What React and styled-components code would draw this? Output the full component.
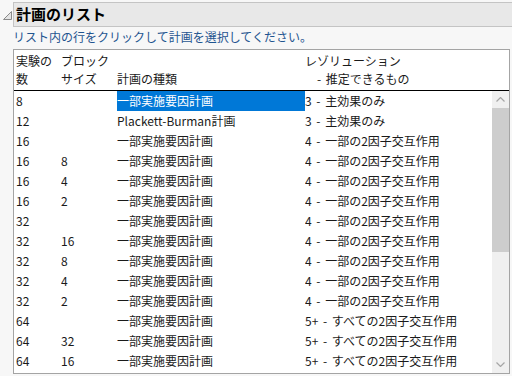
import React from "react";
import styled, { createGlobalStyle } from "styled-components";

const Global = createGlobalStyle`
  html, body { margin: 0; padding: 0; }
  body {
    background: #f7f7f7;
    font-family: "Noto Sans CJK JP", "Noto Sans", sans-serif;
    color: #1a1a1a;
  }
`;

const Page = styled.div`
  width: 512px;
  height: 376px;
  padding-top: 2px;
  box-sizing: border-box;
  overflow: hidden;
`;

const OutlineHeader = styled.div`
  display: flex;
  align-items: center;
  height: 25px;
`;

const Disclosure = styled.div`
  width: 13px;
  height: 25px;
  display: flex;
  align-items: center;
  justify-content: flex-start;
  padding-left: 3px;
  box-sizing: border-box;
  svg { display: block; margin-top: 1px; }
`;

const TitleBar = styled.div`
  flex: 1;
  height: 25px;
  box-sizing: border-box;
  border: 1px solid #c4c4c4;
  border-right: none;
  background: #e8e8e8;
  padding-left: 2px;
  font-size: 15px;
  font-weight: 700;
  line-height: 22px;
  color: #000;
`;

const Content = styled.div`
  padding-left: 13px;
`;

const Hint = styled.div`
  font-size: 12px;
  line-height: 20px;
  height: 20px;
  color: #1f5590;
  white-space: nowrap;
`;

const ListBox = styled.div`
  margin-top: 2px;
  width: 497px;
  height: 325px;
  box-sizing: border-box;
  border: 1px solid #a4a4a4;
  background: #fff;
  display: flex;
  flex-direction: column;
  overflow: hidden;
`;

const HeaderArea = styled.div`
  height: 41px;
  box-sizing: border-box;
  padding: 2px 0 3px 2px;
  border-bottom: 1px solid #000;
  flex-shrink: 0;
`;

const Grid = styled.div`
  display: grid;
  grid-template-columns: 45px 56px 188px 1fr;
  font-size: 12px;
  line-height: ${(p) => p.$lh}px;
  height: ${(p) => p.$lh}px;
  white-space: nowrap;
`;

const HeadCell = styled.div`
  color: #1a1a1a;
  padding-left: ${(p) => p.$indent || 0}px;
  word-spacing: 2px;
`;

const Body = styled.div`
  flex: 1;
  display: flex;
  min-height: 0;
`;

const Rows = styled.div`
  flex: 1;
  padding-left: 2px;
  overflow: hidden;
`;

const Cell = styled.div`
  color: ${(p) => (p.$selected ? "#fff" : "#1a1a1a")};
  background: ${(p) => (p.$selected ? "#0078d7" : "transparent")};
  word-spacing: ${(p) => (p.$spaced ? "2px" : "0")};
  overflow: hidden;
`;

const ScrollBar = styled.div`
  width: 17px;
  background: #f0f0f0;
  display: flex;
  flex-direction: column;
  flex-shrink: 0;
`;

const ArrowButton = styled.div`
  height: 17px;
  display: flex;
  align-items: center;
  justify-content: center;
  flex-shrink: 0;
`;

const Thumb = styled.div`
  height: 144px;
  background: #cdcdcd;
  flex-shrink: 0;
`;

const Track = styled.div`
  flex: 1;
`;

const rows = [
  ["8", "", "一部実施要因計画", "3 - 主効果のみ", true],
  ["12", "", "Plackett-Burman計画", "3 - 主効果のみ"],
  ["16", "", "一部実施要因計画", "4 - 一部の2因子交互作用"],
  ["16", "8", "一部実施要因計画", "4 - 一部の2因子交互作用"],
  ["16", "4", "一部実施要因計画", "4 - 一部の2因子交互作用"],
  ["16", "2", "一部実施要因計画", "4 - 一部の2因子交互作用"],
  ["32", "", "一部実施要因計画", "4 - 一部の2因子交互作用"],
  ["32", "16", "一部実施要因計画", "4 - 一部の2因子交互作用"],
  ["32", "8", "一部実施要因計画", "4 - 一部の2因子交互作用"],
  ["32", "4", "一部実施要因計画", "4 - 一部の2因子交互作用"],
  ["32", "2", "一部実施要因計画", "4 - 一部の2因子交互作用"],
  ["64", "", "一部実施要因計画", "5+ - すべての2因子交互作用"],
  ["64", "32", "一部実施要因計画", "5+ - すべての2因子交互作用"],
  ["64", "16", "一部実施要因計画", "5+ - すべての2因子交互作用"],
];

const Chevron = ({ up }) => (
  <svg width="9" height="5" viewBox="0 0 9 5">
    <polyline
      points={up ? "0.5,4.5 4.5,0.5 8.5,4.5" : "0.5,0.5 4.5,4.5 8.5,0.5"}
      fill="none"
      stroke="#a6a6a6"
      strokeWidth="1.2"
    />
  </svg>
);

export default function App() {
  return (
    <Page>
      <Global />
      <OutlineHeader>
        <Disclosure>
          <svg width="9" height="9" viewBox="0 0 9 9">
            <polygon points="8.5,0.5 8.5,8.5 0.5,8.5" fill="#e4e4e4" stroke="#8a8a8a" strokeWidth="1" />
          </svg>
        </Disclosure>
        <TitleBar>計画のリスト</TitleBar>
      </OutlineHeader>
      <Content>
        <Hint>リスト内の行をクリックして計画を選択してください。</Hint>
        <ListBox>
          <HeaderArea>
            <Grid $lh={18}>
              <HeadCell>実験の</HeadCell>
              <HeadCell>ブロック</HeadCell>
              <HeadCell></HeadCell>
              <HeadCell>レゾリューション</HeadCell>
            </Grid>
            <Grid $lh={18}>
              <HeadCell>数</HeadCell>
              <HeadCell>サイズ</HeadCell>
              <HeadCell>計画の種類</HeadCell>
              <HeadCell $indent={12}>- 推定できるもの</HeadCell>
            </Grid>
          </HeaderArea>
          <Body>
            <Rows>
              {rows.map((r, i) => (
                <Grid $lh={20} key={i}>
                  <Cell>{r[0]}</Cell>
                  <Cell>{r[1]}</Cell>
                  <Cell $selected={r[4]}>{r[2]}</Cell>
                  <Cell $spaced>{r[3]}</Cell>
                </Grid>
              ))}
            </Rows>
            <ScrollBar>
              <ArrowButton>
                <Chevron up />
              </ArrowButton>
              <Thumb />
              <Track />
              <ArrowButton>
                <Chevron />
              </ArrowButton>
            </ScrollBar>
          </Body>
        </ListBox>
      </Content>
    </Page>
  );
}
